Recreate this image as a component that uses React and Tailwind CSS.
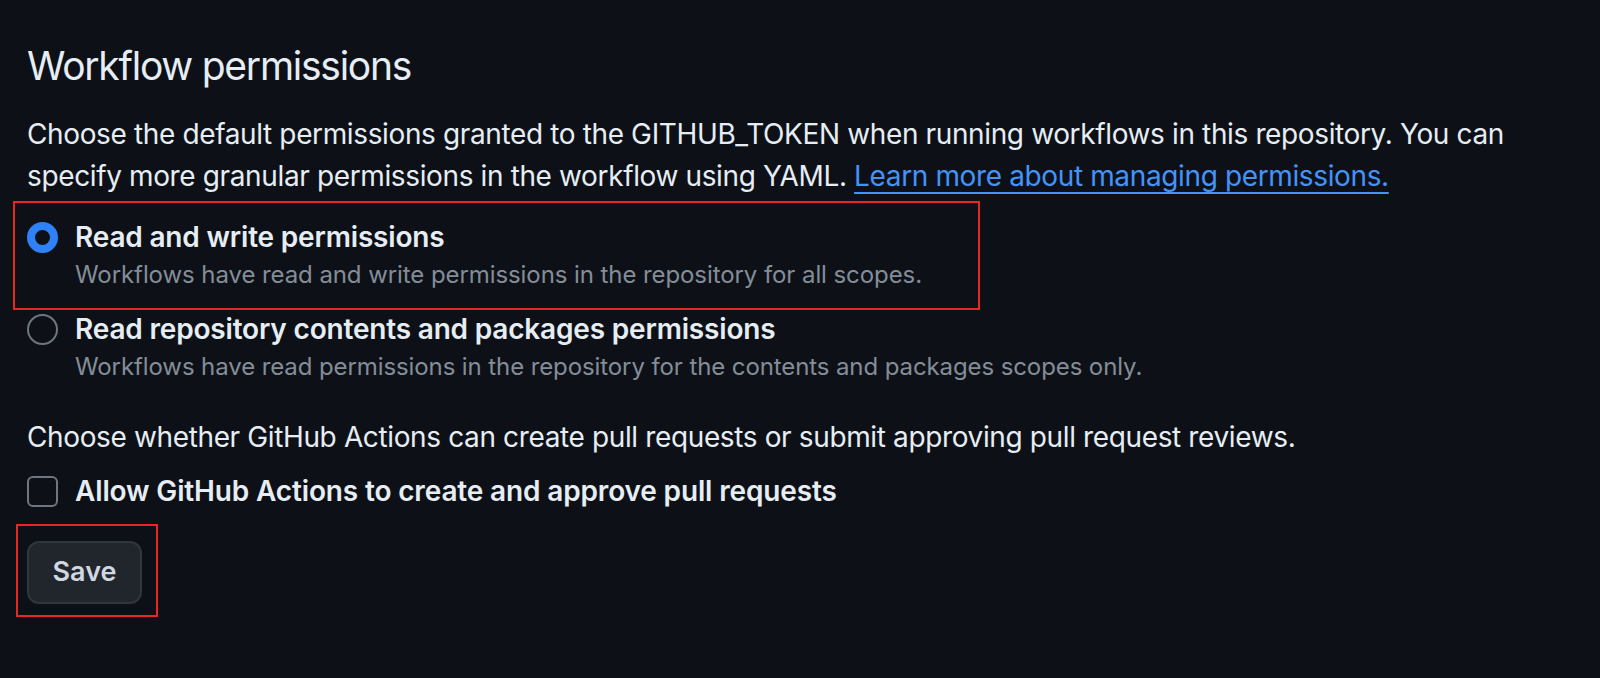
export default function App() {
  return (
    <div
      className="relative h-[678px] w-full overflow-hidden bg-[#0d1117] pl-[27px] pt-[40px] text-[#e6edf3]"
      style={{ fontFamily: 'Inter, "Noto Sans", sans-serif' }}
    >
      <h2 className="text-[39px] font-normal leading-[52px] tracking-[-1.25px]">Workflow permissions</h2>

      <p className="mt-[21px] max-w-[1520px] text-[28px] leading-[42px] tracking-[-0.37px]">
        Choose the default permissions granted to the GITHUB_TOKEN when running workflows in this repository. You can
        specify more granular permissions in the workflow using YAML.{' '}
        <a className="text-[#4493f8] underline decoration-[2px] underline-offset-[6px]">
          Learn more about managing permissions.
        </a>
      </p>

      <div className="mt-[21px] flex flex-col gap-[16px]">
        <label className="flex items-start gap-[17px]">
          <span className="mt-[4px] h-[31px] w-[31px] shrink-0 rounded-full border-[8px] border-[#2f81f7] bg-[#0d1117]" />
          <span className="flex flex-col">
            <span className="text-[28px] font-semibold leading-[38px] tracking-[-0.18px]">Read and write permissions</span>
            <span className="text-[24px] leading-[38px] tracking-[-0.08px] text-[#848d97]">
              Workflows have read and write permissions in the repository for all scopes.
            </span>
          </span>
        </label>
        <label className="flex items-start gap-[17px]">
          <span className="mt-[4px] h-[31px] w-[31px] shrink-0 rounded-full border-[2px] border-[#6e7681]" />
          <span className="flex flex-col">
            <span className="text-[28px] font-semibold leading-[38px] tracking-[-0.18px]">
              Read repository contents and packages permissions
            </span>
            <span className="text-[24px] leading-[38px] tracking-[-0.1px] text-[#848d97]">
              Workflows have read permissions in the repository for the contents and packages scopes only.
            </span>
          </span>
        </label>
      </div>

      <p className="mt-[30px] text-[28px] leading-[42px] tracking-[-0.37px]">
        Choose whether GitHub Actions can create pull requests or submit approving pull request reviews.
      </p>

      <label className="mt-[14px] flex items-center gap-[17px]">
        <span className="h-[31px] w-[31px] shrink-0 rounded-[6px] border-[2px] border-[#6e7681]" />
        <span className="text-[28px] font-semibold leading-[38px] tracking-[-0.15px]">
          Allow GitHub Actions to create and approve pull requests
        </span>
      </label>

      <button className="mt-[31px] flex h-[63px] w-[115px] items-center justify-center rounded-[12px] border-[2px] border-[#30363d] bg-[#21262d] text-[27px] font-semibold text-[#d1d7e0]">
        Save
      </button>

      <div className="pointer-events-none absolute left-[13px] top-[201px] h-[109px] w-[967px] border-[2px] border-[#e8271f]" />
      <div className="pointer-events-none absolute left-[16px] top-[524px] h-[93px] w-[142px] border-[2px] border-[#e8271f]" />
    </div>
  )
}
